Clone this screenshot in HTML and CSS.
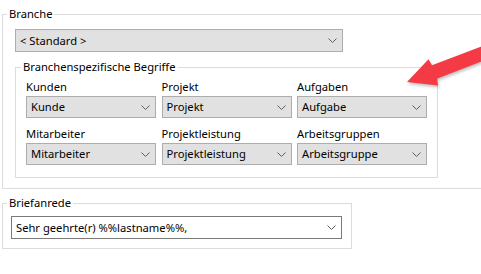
FILE: index.html
```html
<!DOCTYPE html>
<html lang="de">
<head>
<meta charset="utf-8">
<title>Branche</title>
<link rel="stylesheet" href="styles.css">
</head>
<body>
<div class="page">
  <fieldset class="box box-branche">
    <legend>Branche</legend>
    <div class="combo combo-standard"><span>&lt; Standard &gt;</span><svg class="chev" width="9" height="5" viewBox="0 0 9 5"><polyline points="0.5,0.5 4.5,4.5 8.5,0.5"/></svg></div>
    <fieldset class="box box-terms">
      <legend>Branchenspezifische Begriffe</legend>
      <div class="grid">
        <div class="field"><div class="label">Kunden</div><div class="combo"><span>Kunde</span><svg class="chev" width="9" height="5" viewBox="0 0 9 5"><polyline points="0.5,0.5 4.5,4.5 8.5,0.5"/></svg></div></div>
        <div class="field"><div class="label">Projekt</div><div class="combo"><span>Projekt</span><svg class="chev" width="9" height="5" viewBox="0 0 9 5"><polyline points="0.5,0.5 4.5,4.5 8.5,0.5"/></svg></div></div>
        <div class="field"><div class="label">Aufgaben</div><div class="combo"><span>Aufgabe</span><svg class="chev" width="9" height="5" viewBox="0 0 9 5"><polyline points="0.5,0.5 4.5,4.5 8.5,0.5"/></svg></div></div>
        <div class="field"><div class="label">Mitarbeiter</div><div class="combo"><span>Mitarbeiter</span><svg class="chev" width="9" height="5" viewBox="0 0 9 5"><polyline points="0.5,0.5 4.5,4.5 8.5,0.5"/></svg></div></div>
        <div class="field"><div class="label">Projektleistung</div><div class="combo"><span>Projektleistung</span><svg class="chev" width="9" height="5" viewBox="0 0 9 5"><polyline points="0.5,0.5 4.5,4.5 8.5,0.5"/></svg></div></div>
        <div class="field"><div class="label">Arbeitsgruppen</div><div class="combo"><span>Arbeitsgruppe</span><svg class="chev" width="9" height="5" viewBox="0 0 9 5"><polyline points="0.5,0.5 4.5,4.5 8.5,0.5"/></svg></div></div>
      </div>
    </fieldset>
  </fieldset>
  <fieldset class="box box-anrede">
    <legend>Briefanrede</legend>
    <div class="combo combo-edit"><span>Sehr geehrte(r) %%lastname%%,</span><svg class="chev" width="9" height="5" viewBox="0 0 9 5"><polyline points="0.5,0.5 4.5,4.5 8.5,0.5"/></svg></div>
  </fieldset>
</div>
<svg class="arrow" width="481" height="274" viewBox="0 0 481 274">
  <polygon points="407,82 428.5,59.3 432,65.3 482,46.3 482,61.3 436.8,78.8 438.1,85.5"/>
</svg>
</body>
</html>
```

FILE: styles.css
```css
html, body {
  margin: 0;
  padding: 0;
  background: #ffffff;
  overflow: hidden;
}

body {
  width: 481px;
  height: 274px;
  position: relative;
  font-family: "Noto Sans", "Open Sans", sans-serif;
  font-size: 11.2px;
  color: #000000;
}

.page {
  padding-left: 2px;
}

.box {
  border: 1px solid #dcdcdc;
  margin: 0;
  padding: 0;
  min-width: 0;
}

.box legend {
  padding: 0 2px;
  line-height: 16px;
  font-size: 11.2px;
}

.box-branche {
  margin-top: 6px;
  width: 480px;
  padding: 7px 0 10px 12px;
  box-sizing: border-box;
}

.box-branche > legend {
  margin-left: -8px;
}

.combo {
  box-sizing: border-box;
  height: 22px;
  background: #e1e1e1;
  border: 1px solid #adadad;
  display: flex;
  align-items: center;
  justify-content: space-between;
  padding: 0 5px 0 4px;
  line-height: 16px;
  white-space: nowrap;
}

.chev {
  flex: none;
}

.chev polyline {
  fill: none;
  stroke: #5f5f5f;
  stroke-width: 1;
}

.combo-standard {
  width: 328px;
  height: 23px;
}

.box-terms {
  margin-top: 7px;
  width: 423px;
  box-sizing: border-box;
  padding: 4px 10px 12px 10px;
}

.box-terms > legend {
  margin-left: -5px;
}

.grid {
  display: grid;
  grid-template-columns: 130px 130px 130px;
  column-gap: 5.5px;
  row-gap: 8px;
}

.label {
  line-height: 16px;
  margin-bottom: 1px;
}

.box-anrede {
  margin-top: 6px;
  width: 350px;
  box-sizing: border-box;
  padding: 5px 8px 9px 8px;
}

.box-anrede > legend {
  margin-left: -4px;
}

.combo-edit {
  width: 331px;
  height: 23px;
  background: #ffffff;
  border-color: #7a7a7a;
}

.arrow {
  position: absolute;
  left: 0;
  top: 0;
  pointer-events: none;
}

.arrow polygon {
  fill: #f43b45;
  filter: drop-shadow(1px 2px 1.5px rgba(0, 0, 0, 0.25));
}
```
